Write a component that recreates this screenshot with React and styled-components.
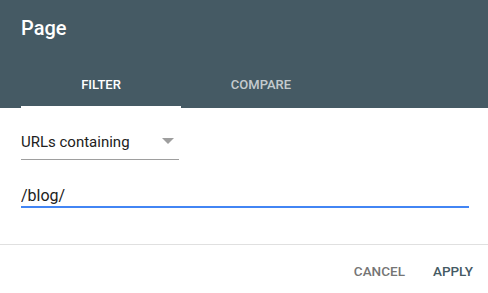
import React, { useState } from 'react'
import styled, { createGlobalStyle } from 'styled-components'

const GlobalStyle = createGlobalStyle`
    html, body {
        margin: 0;
        padding: 0;
        background: #fff;
    }
    body {
        font-family: Roboto, 'Liberation Sans', Arial, sans-serif;
    }
`

const Dialog = styled.div`
    width: 488px;
    height: 293px;
    display: flex;
    flex-direction: column;
    background: #fff;
    overflow: hidden;
`

const Header = styled.header`
    background-color: #455a64;
    display: flex;
    flex-direction: column;
`

const Title = styled.h2`
    margin: 0;
    padding: 14px 21px 18px;
    font-size: 20px;
    line-height: 28px;
    font-weight: 500;
    color: #fff;
`

const TabBar = styled.div`
    display: flex;
    padding-left: 21px;
    height: 48px;
`

const Tab = styled.button`
    position: relative;
    width: 160px;
    height: 48px;
    padding: 0;
    border: none;
    background: none;
    font-family: inherit;
    font-size: 13px;
    font-weight: 500;
    text-transform: uppercase;
    color: ${(p) => (p.$active ? '#fff' : 'rgba(255, 255, 255, 0.7)')};
    cursor: pointer;

    &::after {
        content: '';
        position: absolute;
        left: 0;
        right: 0;
        bottom: 0;
        height: 2px;
        background: ${(p) => (p.$active ? '#fff' : 'transparent')};
    }
`

const Body = styled.div`
    display: flex;
    flex-direction: column;
    gap: 25px;
    padding: 16px 19px 36px 21px;
    border-bottom: 1px solid #e0e0e0;
`

const Select = styled.div`
    width: 158px;
    height: 36px;
    display: flex;
    align-items: center;
    justify-content: space-between;
    padding-right: 5px;
    box-sizing: border-box;
    border-bottom: 1px solid #9e9e9e;
    font-size: 15px;
    color: #212121;
    cursor: pointer;
`

const Arrow = styled.span`
    width: 0;
    height: 0;
    border-left: 6px solid transparent;
    border-right: 6px solid transparent;
    border-top: 6px solid #9e9e9e;
    margin-top: -2px;
`

const Input = styled.input`
    display: block;
    width: 100%;
    height: 21px;
    box-sizing: content-box;
    padding: 0;
    border: none;
    border-bottom: 2px solid #4285f4;
    outline: none;
    font-family: inherit;
    font-size: 16px;
    line-height: 21px;
    color: #212121;
    background: transparent;
`

const Footer = styled.footer`
    display: flex;
    justify-content: flex-end;
    gap: 12px;
    padding: 8px 7px 8px 8px;
`

const Button = styled.button`
    height: 36px;
    padding: 0 8px;
    border: none;
    background: none;
    font-family: inherit;
    font-size: 13.5px;
    font-weight: 500;
    text-transform: uppercase;
    color: ${(p) => (p.$primary ? '#455a64' : '#757575')};
    cursor: pointer;
`

export default function App() {
    const [tab, setTab] = useState('filter')
    const [value, setValue] = useState('/blog/')

    return (
        <>
            <GlobalStyle />
            <Dialog>
                <Header>
                    <Title>Page</Title>
                    <TabBar>
                        <Tab $active={tab === 'filter'} onClick={() => setTab('filter')}>
                            Filter
                        </Tab>
                        <Tab $active={tab === 'compare'} onClick={() => setTab('compare')}>
                            Compare
                        </Tab>
                    </TabBar>
                </Header>
                <Body>
                    <Select>
                        <span>URLs containing</span>
                        <Arrow />
                    </Select>
                    <Input value={value} onChange={(e) => setValue(e.target.value)} />
                </Body>
                <Footer>
                    <Button>Cancel</Button>
                    <Button $primary>Apply</Button>
                </Footer>
            </Dialog>
        </>
    )
}
